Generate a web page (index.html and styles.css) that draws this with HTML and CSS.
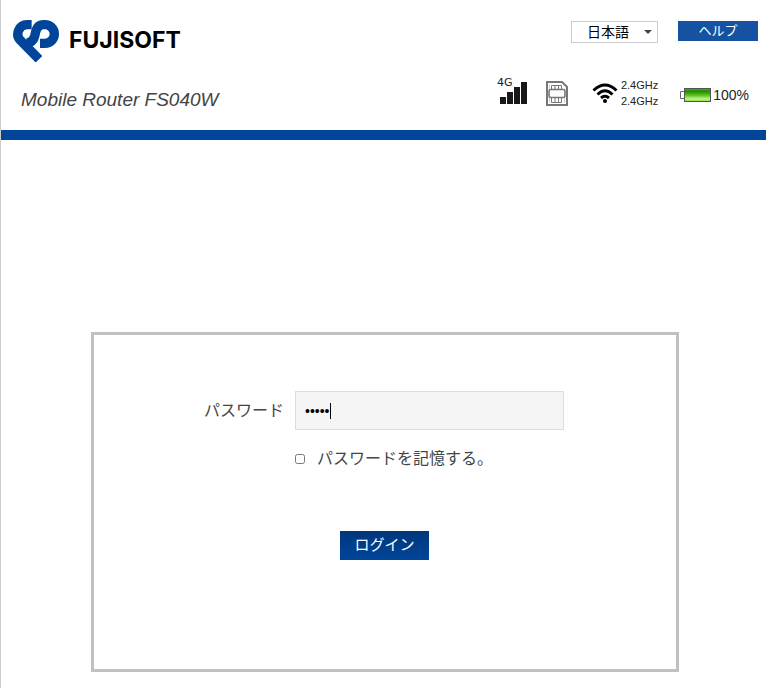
FILE: index.html
```html
<!DOCTYPE html>
<html lang="ja">
<head>
  <meta charset="UTF-8">
  <meta name="viewport" content="width=device-width, initial-scale=1">
  <title>Mobile Router FS040W</title>
  <link rel="stylesheet" href="styles.css">
</head>
<body>
  <header class="header">
    <div class="brand">
      <div class="logo">
        <svg class="logo-mark" viewBox="0 0 138 129" fill="none" stroke="#00459a" stroke-width="28">
          <path d="M56 14H42A28 28 0 0 0 22 61L78 118"/>
          <path d="M81 70H96A28 28 0 0 0 96 14H92C78 14 70 24 67 40C64 58 56 69 40 69"/>
        </svg>
        <span class="logo-text">FUJISOFT</span>
      </div>
      <div class="product">Mobile Router FS040W</div>
    </div>

    <div class="tools">
      <div class="menu">
        <div class="lang">
          <select id="lang" name="lang" aria-label="言語">
            <option value="ja">日本語</option>
            <option value="en">English</option>
          </select>
          <svg class="lang-arrow" viewBox="0 0 8 4"><path d="M0 0h8L4 4z" fill="#444"/></svg>
        </div>
        <button type="button" class="help-btn">ヘルプ</button>
      </div>

      <div class="status">
        <div class="signal">
          <span class="signal-type">4G</span>
          <svg width="27" height="22" viewBox="0 0 27 22" fill="#1a1718">
            <path d="M0 15h6v7H0zM7 10h6v12H7zM14 5h6v17h-6zM21 0h6v22h-6z"/>
          </svg>
        </div>
        <svg class="sim" width="22" height="25" viewBox="0 0 22 25" fill="none" stroke="#777">
          <path d="M1 1h15l5 5v18H1z" stroke-width="2"/>
          <path d="M3.500 21.500v-18M18.500 21.500v-14" stroke="#ccc"/>
          <path d="M5 8.500h12q2 0 2 2v4q0 2-2 2H5q-2 0-2-2v-4q0-2 2-2z" stroke-width="1.500"/>
          <path d="M5.500 8V4.500h10V8M9 4.500V8M12.500 4.500V8M5.500 17v4.500h10V17M9 17v4M12.500 17v4"/>
        </svg>
        <div class="wifi">
          <svg width="26" height="20" viewBox="0 0 26 20" fill="none" stroke="#000" stroke-width="3">
            <path d="M1.500 7.500Q13-3.500 24.500 7.500M5.500 11.500Q13 4 20.500 11.500M9 15Q13 11.500 17 15"/>
            <circle cx="13" cy="18" r="2" fill="#000" stroke="none"/>
          </svg>
          <div class="bands">
            <span>2.4GHz</span>
            <span>2.4GHz</span>
          </div>
        </div>
        <div class="battery">
          <svg width="31" height="14" viewBox="0 0 31 14">
            <defs>
              <linearGradient id="charge" x1="0" y1="0" x2="0" y2="1">
                <stop offset="0" stop-color="#55b81c"/>
                <stop offset=".2" stop-color="#1d8a00"/>
                <stop offset=".5" stop-color="#55bd16"/>
                <stop offset=".8" stop-color="#c0f58c"/>
                <stop offset="1" stop-color="#7fd840"/>
              </linearGradient>
            </defs>
            <path d="M4 3.500H.5v7H4" fill="#fff" stroke="#666"/>
            <rect x="4.500" y=".5" width="26" height="13" fill="url(#charge)" stroke="#555"/>
          </svg>
          <span>100%</span>
        </div>
      </div>
    </div>
  </header>

  <main class="main">
    <form class="login">
      <div class="row">
        <label class="name" for="password">パスワード</label>
        <div class="field">
          <input type="password" id="password" name="password" value="admin">
          <span class="caret"></span>
        </div>
      </div>
      <div class="remember">
        <input type="checkbox" id="remember" name="remember">
        <label for="remember">パスワードを記憶する。</label>
      </div>
      <button type="button" class="login-btn">ログイン</button>
    </form>
  </main>
</body>
</html>
```
FILE: styles.css
```css
* {
  box-sizing: border-box;
}
body {
  margin: 0;
  min-height: 100vh;
  border-left: 1px solid #ccc;
  background: #fff;
  color: #444;
  font-family: "Liberation Sans", "Noto Sans CJK JP", sans-serif;
  font-size: 16px;
}
svg {
  display: block;
}
button, input, select {
  font-family: inherit;
}
.header {
  display: flex;
  justify-content: space-between;
  height: 140px;
  padding: 20px 8px 0 12px;
  border-bottom: 10px solid #00459a;
}
.logo {
  display: flex;
  align-items: flex-start;
  gap: 10px;
  height: 43px;
}
.logo-mark {
  width: 46px;
  height: 43px;
}
.logo-text {
  color: #000;
  font-family: Inter, "Liberation Sans", sans-serif;
  font-size: 23px;
  font-weight: bold;
  line-height: 40px;
}
.product {
  margin: 25px 0 0 8px;
  font-size: 19px;
  font-style: italic;
  line-height: 24px;
}
.menu {
  display: flex;
  justify-content: flex-end;
  align-items: flex-start;
  gap: 20px;
  padding-top: 1px;
}
.lang {
  position: relative;
}
.lang select {
  display: block;
  width: 87px;
  height: 22px;
  padding: 0 15px;
  border: 1px solid #ccc;
  border-radius: 0;
  background: #fff;
  color: #000;
  font-size: 14px;
  line-height: 20px;
  appearance: none;
}
.lang-arrow {
  position: absolute;
  top: 9px;
  right: 6px;
  width: 8px;
  height: 4px;
  pointer-events: none;
}
.help-btn {
  width: 80px;
  height: 20px;
  padding: 0;
  border: none;
  background: #1553a2;
  color: #fff;
  font-size: 13px;
  line-height: 20px;
  cursor: pointer;
}
.status {
  display: flex;
  align-items: center;
  height: 40px;
  margin-top: 30px;
  padding-right: 9px;
  color: #222;
}
.signal {
  position: relative;
  margin-right: 19px;
}
.signal-type {
  position: absolute;
  left: -3px;
  top: -5px;
  font-family: "DejaVu Sans", sans-serif;
  font-size: 11px;
  line-height: 12px;
}
.sim {
  margin-right: 24px;
}
.wifi {
  display: flex;
  align-items: center;
  gap: 3px;
  margin-right: 22px;
}
.bands {
  display: flex;
  flex-direction: column;
  font-size: 11px;
  line-height: 16px;
}
.battery {
  display: flex;
  align-items: center;
  gap: 2px;
  padding-top: 3px;
  font-size: 14px;
}
.main {
  padding: 192px 16px 16px 19px;
}
.login {
  max-width: 588px;
  min-height: 340px;
  margin: 0 auto;
  padding: 56px 112px 0 110px;
  border: 3px solid #c1c1c1;
}
.row {
  display: flex;
  align-items: center;
}
.name {
  flex: none;
  width: 91px;
  padding-bottom: 4px;
}
.field {
  position: relative;
  flex: 1;
  min-width: 0;
}
#password {
  display: block;
  width: 100%;
  height: 39px;
  padding: 0 9px;
  border: 1px solid #ddd;
  background: #f5f5f5;
  color: #000;
  font-size: 14px;
  outline: none;
}
.caret {
  position: absolute;
  top: 12px;
  left: 35px;
  width: 1px;
  height: 16px;
  background: #000;
}
.remember {
  display: flex;
  align-items: center;
  gap: 12px;
  margin: 17px 0 0 91px;
  line-height: 24px;
}
.remember input {
  width: 10px;
  height: 10px;
  margin: 0;
}
.login-btn {
  display: block;
  width: 89px;
  height: 29px;
  margin: 60px 0 0 136px;
  padding: 0 0 2px;
  border: none;
  background: linear-gradient(#00377b, #00459a);
  color: #fff;
  font-size: 15px;
  line-height: 27px;
  cursor: pointer;
}
```
